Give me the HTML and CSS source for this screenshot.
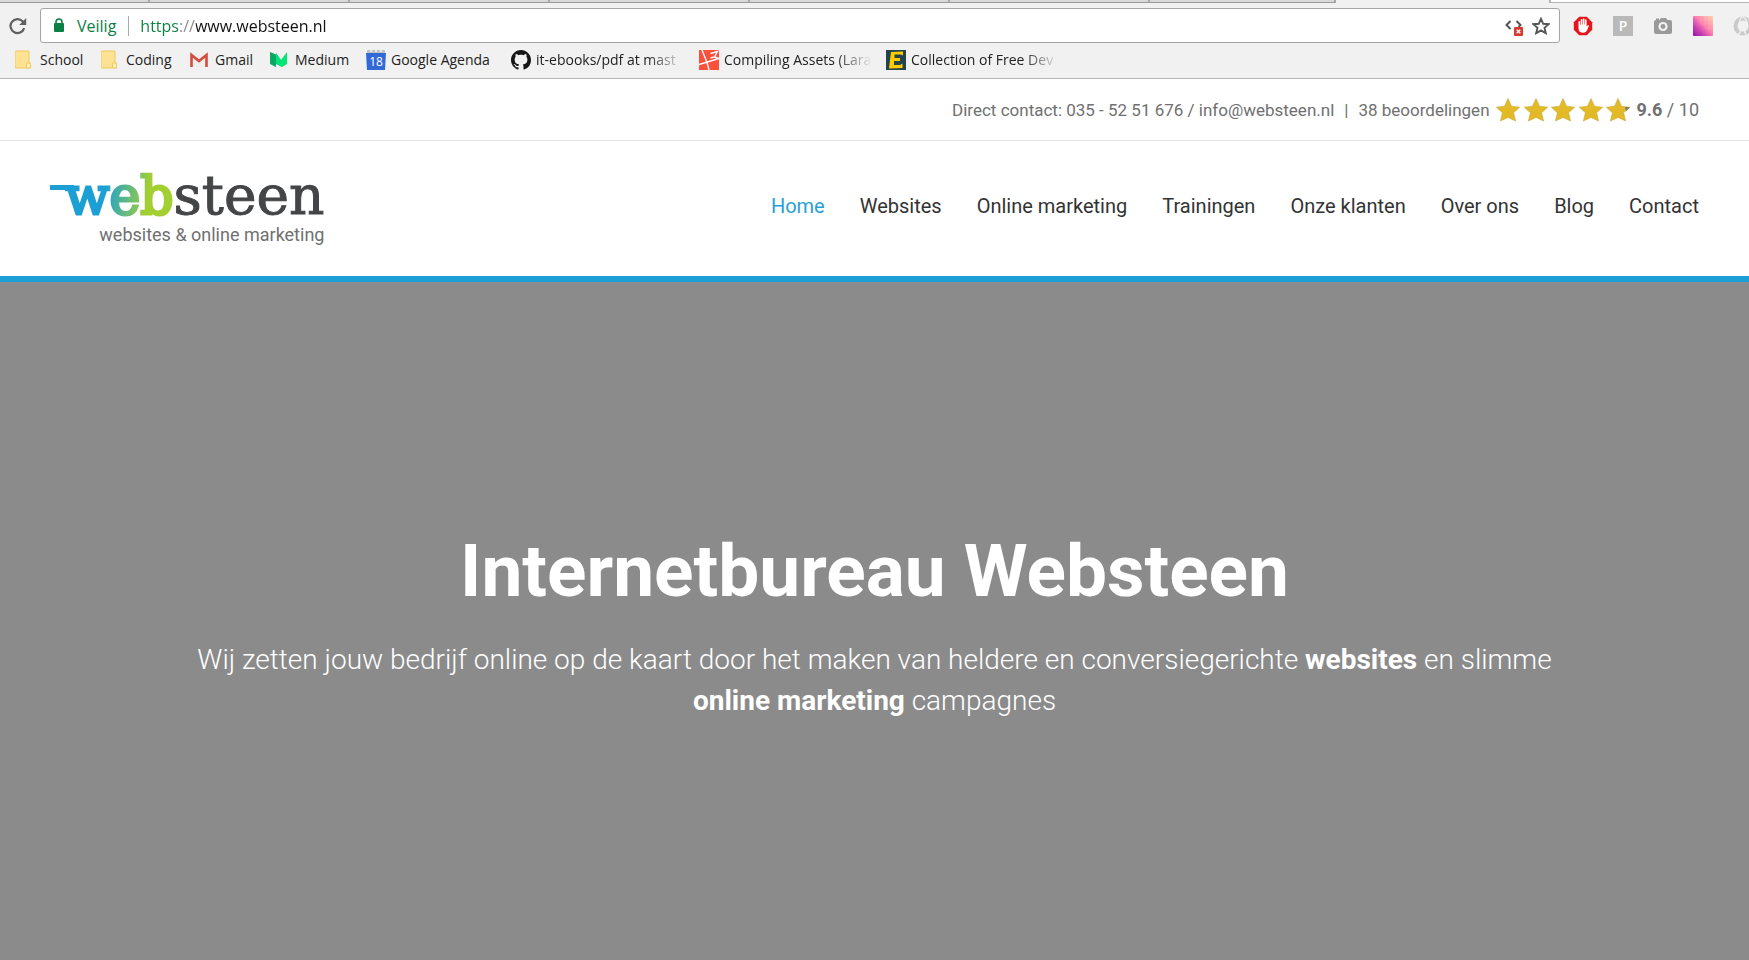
FILE: index.html
```html
<!DOCTYPE html>
<html lang="nl">
<head>
<meta charset="utf-8">
<meta name="viewport" content="width=device-width, initial-scale=1">
<title>Internetbureau Websteen</title>
<link rel="stylesheet" href="styles.css">
</head>
<body>
<div class="browser">
  <div class="tabs"><i></i><i></i><i></i><i></i><i></i><i></i><i></i><b></b><u></u></div>
  <div class="toolbar">
    <button class="icon-button reload" aria-label="Vernieuwen">
      <svg width="18" height="18" viewBox="0 0 18 18"><path d="M15.2 11.2A7 7 0 1 1 13.6 4.2L15 5.6" fill="none" stroke="#5f5f5f" stroke-width="2.2"/><path d="M17.2 1v7h-7z" fill="#5f5f5f"/></svg>
    </button>
    <div class="omnibox">
      <svg class="lock" width="12" height="15" viewBox="0 0 12 15"><rect x="1" y="5" width="10" height="9" rx="1" fill="#0b8043"/><path d="M3 6V4a3 3 0 0 1 6 0v2" fill="none" stroke="#0b8043" stroke-width="1.6"/></svg>
      <label class="secure" for="url">Veilig</label>
      <input class="url" id="url" type="text" value="https://www.websteen.nl" spellcheck="false">
      <button class="icon-button" aria-label="Script geblokkeerd">
        <svg width="20" height="20" viewBox="0 0 20 20"><path d="M6.500 5L2.500 9l4 4M12.500 5l4 4-2 2" fill="none" stroke="#555" stroke-width="2"/><rect x="10" y="11" width="9" height="9" rx="1" fill="#d83a30"/><path d="M12.700 13.700l3.600 3.600m0-3.600l-3.600 3.600" stroke="#fff" stroke-width="1.400"/></svg>
      </button>
      <button class="icon-button" aria-label="Bladwijzer toevoegen">
        <svg width="18" height="18" viewBox="0 0 18 18"><path d="M9 1.800l2.200 5 5.500.4-4.200 3.600 1.300 5.400L9 13.400l-4.800 2.800 1.300-5.400L1.300 7.200l5.500-.4z" fill="none" stroke="#555" stroke-width="1.900"/></svg>
      </button>
    </div>
    <div class="extensions">
      <button class="icon-button" aria-label="AdBlock"><svg width="20" height="20" viewBox="0 0 20 20"><path d="M6.200.8h7.600l5.400 5.400v7.600l-5.400 5.400H6.200L.8 13.800V6.200z" fill="#e8141c"/><path d="M5.500 10V5.500q.8-1.200 1.600 0V8.800h.6V3.500q.8-1.200 1.600 0v5h.5V2.900q.9-1.200 1.700 0v5.600h.5V3.900q.8-1.100 1.600 0v6.700q1.300-1.700 2.500-1.100-1.200 3-2.400 5.500-1 1.800-3.300 1.800-4.900 0-4.900-4.500z" fill="#fff"/></svg></button>
      <button class="icon-button" aria-label="P"><svg width="20" height="20" viewBox="0 0 20 20"><rect width="20" height="20" fill="#b9b9b9"/><text class="glyph" x="10" y="15" text-anchor="middle" font-size="14">P</text></svg></button>
      <button class="icon-button" aria-label="Schermafbeelding"><svg width="20" height="20" viewBox="0 0 20 20"><path d="M2.500 4H3V2.500h3V4h.5L8 2h5l1.500 2H17q2 0 2 2v10q0 2-2 2H3q-2 0-2-2V6q0-1.500 1.500-2z" fill="#9a9a9a"/><circle cx="10" cy="10.500" r="4.600" fill="#f1f1f1"/><circle cx="10" cy="10.500" r="2.400" fill="#9a9a9a"/></svg></button>
      <button class="icon-button" aria-label="Kleuren"><svg width="20" height="20" viewBox="0 0 20 20"><defs><linearGradient id="pink" x1="0" y1="1" x2="1" y2="0"><stop offset="0" stop-color="#9014a8"/><stop offset=".25" stop-color="#c339b2"/><stop offset=".55" stop-color="#ff7fae"/><stop offset="1" stop-color="#ffd0a8"/></linearGradient></defs><rect width="20" height="20" rx="1" fill="url(#pink)"/><path d="M8 0v8M12 0v10M16 0v14M7 4h13M9 8h11M12 12h8" stroke="#fff" stroke-opacity=".16"/></svg></button>
      <button class="icon-button" aria-label="Extensie"><svg width="20" height="20" viewBox="0 0 20 20"><circle cx="10" cy="10" r="7.500" fill="none" stroke="#cacaca" stroke-width="4"/><path d="M10 0Q5 4 7 10t-2 9M10 1q6 4 3 9t0 8" fill="none" stroke="#f1f1f1" stroke-width="1.500"/></svg></button>
    </div>
  </div>
  <nav class="bookmarks" aria-label="Bladwijzers">
    <a href="#"><svg width="20" height="20" viewBox="0 0 20 20"><path d="M0 2q0-1 1-1h13v12h1.500v5H1q-1 0-1-1z" fill="#fde293" stroke="#efc95b"/><rect x="11.500" y="13" width="4" height="5" rx="1" fill="#fff0b8" stroke="#efc95b"/></svg><span>School</span></a>
    <a href="#"><svg width="20" height="20" viewBox="0 0 20 20"><path d="M0 2q0-1 1-1h13v12h1.500v5H1q-1 0-1-1z" fill="#fde293" stroke="#efc95b"/><rect x="11.500" y="13" width="4" height="5" rx="1" fill="#fff0b8" stroke="#efc95b"/></svg><span>Coding</span></a>
    <a href="#"><svg width="20" height="20" viewBox="0 0 20 20"><path d="M1 4h16v13H1z" fill="#eee"/><path d="M1.500 17V5L9 11l7.500-6v12" fill="none" stroke="#d54b3d" stroke-width="2.600"/></svg><span>Gmail</span></a>
    <a href="#"><svg width="20" height="20" viewBox="0 0 20 20"><path d="M6 3l6 9v5l-6-3z" fill="#12c878"/><path d="M6 3l5 7 6-8v12l-5 3-6-4z" fill="#00e676"/><path d="M0 2l6 2.500V17l-6-3z" fill="#08a765"/></svg><span>Medium</span></a>
    <a href="#"><svg width="20" height="20" viewBox="0 0 20 20"><path d="M1 0h18v4H1z" fill="#c2c2c2"/><path d="M5 0v2M10 0v2M15 0v2" stroke="#f1f1f1" stroke-width="1.500"/><path d="M0 3h20l-1 17H1z" fill="#3369d6"/><text class="glyph light" x="10" y="16" text-anchor="middle" font-size="12">18</text></svg><span>Google Agenda</span></a>
    <a href="#"><svg width="20" height="20" viewBox="0 0 16 16"><path fill="#161616" d="M8 0C3.580 0 0 3.580 0 8c0 3.540 2.290 6.530 5.470 7.590.4.070.55-.17.55-.38 0-.19-.01-.82-.01-1.490-2.010.37-2.530-.49-2.690-.94-.09-.23-.48-.94-.82-1.130-.28-.15-.68-.52-.01-.53.63-.01 1.080.58 1.230.82.720 1.210 1.870.87 2.330.66.070-.52.28-.87.51-1.070-1.780-.2-3.640-.89-3.640-3.950 0-.87.31-1.590.82-2.150-.08-.2-.36-1.020.08-2.120 0 0 .67-.21 2.200.82.640-.18 1.320-.27 2-.27s1.360.09 2 .27c1.530-1.040 2.200-.82 2.200-.82.440 1.100.16 1.920.08 2.120.51.56.82 1.270.82 2.150 0 3.070-1.870 3.750-3.650 3.950.29.25.54.73.54 1.480 0 1.070-.01 1.930-.01 2.200 0 .21.15.46.55.38A8.010 8.010 0 0 0 16 8c0-4.420-3.580-8-8-8z"/></svg><span class="fade">it-ebooks/pdf at mast</span></a>
    <a href="#"><svg width="20" height="20" viewBox="0 0 20 20"><path d="M0 0h20v20H0z" fill="#fb503b"/><path d="M3 0l5 12.500M0 14.500l20-6M8 12.500L10 20M11.500 3.500L18.500 1.500l-3 5.500-4 1M15.500 7l4.500 1.500" fill="none" stroke="#fff" stroke-width="1.400"/></svg><span class="fade">Compiling Assets (Lara</span></a>
    <a href="#"><svg width="20" height="20" viewBox="0 0 20 20"><path d="M0 0h20v20H0z" fill="#24444c"/><path d="M5 2l12-.5v4l-2-1H8.500V8H14v3H8v4h6l2.500-1.500V18L3 18.500z" fill="#fc0"/></svg><span class="fade">Collection of Free Dev</span></a>
  </nav>
</div>
<header>
  <div class="topbar">
    <span>Direct contact: 035 - 52 51 676 / info@websteen.nl</span>
    <span>|</span>
    <span>38 beoordelingen</span>
    <svg class="stars" width="136" height="24" viewBox="0 0 136 24" role="img" aria-label="9.6 van 10">
      <defs><path id="star" d="M12 .5l3.500 7.700 8.200 1-6.100 5.600 2 8.200L12 19.500 4.400 23l2-8.200L.3 9.200l8.200-1z"/></defs>
      <g fill="#e2ba27" stroke="#c9aa3b" stroke-width=".6"><use href="#star"/><use href="#star" x="28"/><use href="#star" x="55"/><use href="#star" x="83"/><use href="#star" x="110"/></g>
      <path d="M129 9l5 .5-4 3.500z" fill="#777"/>
    </svg>
    <span class="score"><strong>9.6</strong> / 10</span>
  </div>
  <div class="mainbar">
    <a class="logo" href="#">
      <span class="wordmark"><span class="web">web</span><span class="steen">steen</span></span>
      <span class="tagline">websites &amp; online marketing</span>
    </a>
    <nav class="menu" aria-label="Hoofdmenu">
      <a class="active" href="#">Home</a><a href="#">Websites</a><a href="#">Online marketing</a><a href="#">Trainingen</a><a href="#">Onze klanten</a><a href="#">Over ons</a><a href="#">Blog</a><a href="#">Contact</a>
    </nav>
  </div>
</header>
<main class="hero">
  <h1>Internetbureau Websteen</h1>
  <p>Wij zetten jouw bedrijf online op de kaart door het maken van heldere en conversiegerichte <strong>websites</strong> en slimme <strong>online marketing</strong> campagnes</p>
</main>
</body>
</html>
```

FILE: styles.css
```css
* { box-sizing: border-box; }
body {
  margin: 0;
  min-height: 100vh;
  display: flex;
  flex-direction: column;
  overflow-x: hidden;
  font-family: Roboto, "Liberation Sans", sans-serif;
  color: #707070;
  background: #fff;
}
a { color: inherit; text-decoration: none; }
svg { display: block; flex: none; }

.browser {
  background: #f1f1f1;
  border-bottom: 1px solid #b6b6b6;
  font-family: "Open Sans", "Noto Sans", sans-serif;
  color: #222;
  overflow: hidden;
}
.tabs { display: flex; height: 3px; }
.tabs i { width: 200px; background: #d9d9d9; border-bottom: 1px solid #999; border-right: 2px solid #aaa; }
.tabs i:first-child { width: 150px; }
.tabs i:nth-child(7) { width: 186px; }
.tabs b { width: 213px; }
.tabs u { flex: 1; background: #fff; border: 1px solid #b6b6b6; border-width: 0 0 1px 2px; }

.toolbar { display: flex; align-items: center; padding: 5px 0 0; }
.icon-button { display: block; flex: none; border: 0; padding: 0; background: none; }
.reload { padding: 0 13px 0 9px; }
.omnibox {
  flex: 1;
  display: flex;
  align-items: center;
  height: 35px;
  padding: 0 9px 0 12px;
  border: 1px solid #a6a6a6;
  border-radius: 3px;
  background: #fff;
  gap: 8px;
  font-size: 16px;
}
.secure { color: #0b8043; padding: 0 12px 0 4px; border-right: 1px solid #aaa; line-height: 20px; }
.url {
  flex: 1;
  min-width: 0;
  height: 30px;
  border: 0;
  padding: 0 0 0 3px;
  outline: 0;
  font: inherit;
  color: transparent;
  background: linear-gradient(90deg, #0b8043 0 43px, #888 43px 59px, #111 59px);
  -webkit-background-clip: text;
  background-clip: text;
}
.extensions { display: flex; gap: 20px; padding-left: 13px; margin-right: -4px; }
.glyph { fill: #fff; font-family: "Open Sans", sans-serif; font-weight: 600; }
.light { font-weight: 400; }

.bookmarks {
  display: grid;
  grid-template-columns: 86px 89px 80px 96px 145px 188px 187px 180px;
  padding: 7px 0 8px 15px;
  font-size: 14px;
  line-height: 20px;
}
.bookmarks a { display: flex; gap: 5px; min-width: 0; }
.bookmarks span { white-space: nowrap; }
.bookmarks .fade {
  -webkit-mask-image: linear-gradient(90deg, #000 112px, transparent 148px);
  mask-image: linear-gradient(90deg, #000 112px, transparent 148px);
}

.topbar {
  display: flex;
  justify-content: flex-end;
  align-items: center;
  height: 62px;
  padding: 0 50px;
  border-bottom: 1px solid #e3e3e3;
  font-size: 17px;
  gap: 10px;
}
.stars { margin: 0 -5px 0 -4px; }
.score { font-size: 18px; }
.mainbar {
  display: flex;
  justify-content: space-between;
  align-items: center;
  padding: 26px 50px 30px;
  border-bottom: 6px solid #1b9fd4;
}
.logo { display: flex; flex-direction: column; align-items: flex-end; }
.wordmark {
  display: flex;
  align-items: baseline;
  font: 55px/56px "DejaVu Serif", serif;
  color: #444547;
  background: linear-gradient(#1b9fd4, #1b9fd4) 0 18px / 24px 5px no-repeat;
  padding-left: 15px;
}
.web {
  font-size: 52px;
  color: transparent;
  -webkit-text-stroke: 3px transparent;
  background: linear-gradient(100deg, #1b9fd4 36%, #7ac265 64%, #a4cf30 74%);
  -webkit-background-clip: text;
  background-clip: text;
}
.steen { -webkit-text-stroke: 1px #444547; }
.tagline { font-size: 18px; line-height: 22px; }
.menu { display: flex; gap: 35px; font-size: 20px; line-height: 26px; padding-bottom: 2px; color: #333; }
.menu .active { color: #2a9fd6; }

.hero {
  flex: 1;
  display: flex;
  flex-direction: column;
  align-items: center;
  justify-content: center;
  padding: 47px 50px 40px;
  background: #8b8b8b;
  color: #fff;
  text-align: center;
}
h1 { margin: 0 0 25px; font-size: 73px; line-height: 86px; font-weight: 700; }
.hero p { margin: 0; max-width: 1400px; font-size: 28px; line-height: 41px; font-weight: 300; }
.hero strong { font-weight: 700; }
```
